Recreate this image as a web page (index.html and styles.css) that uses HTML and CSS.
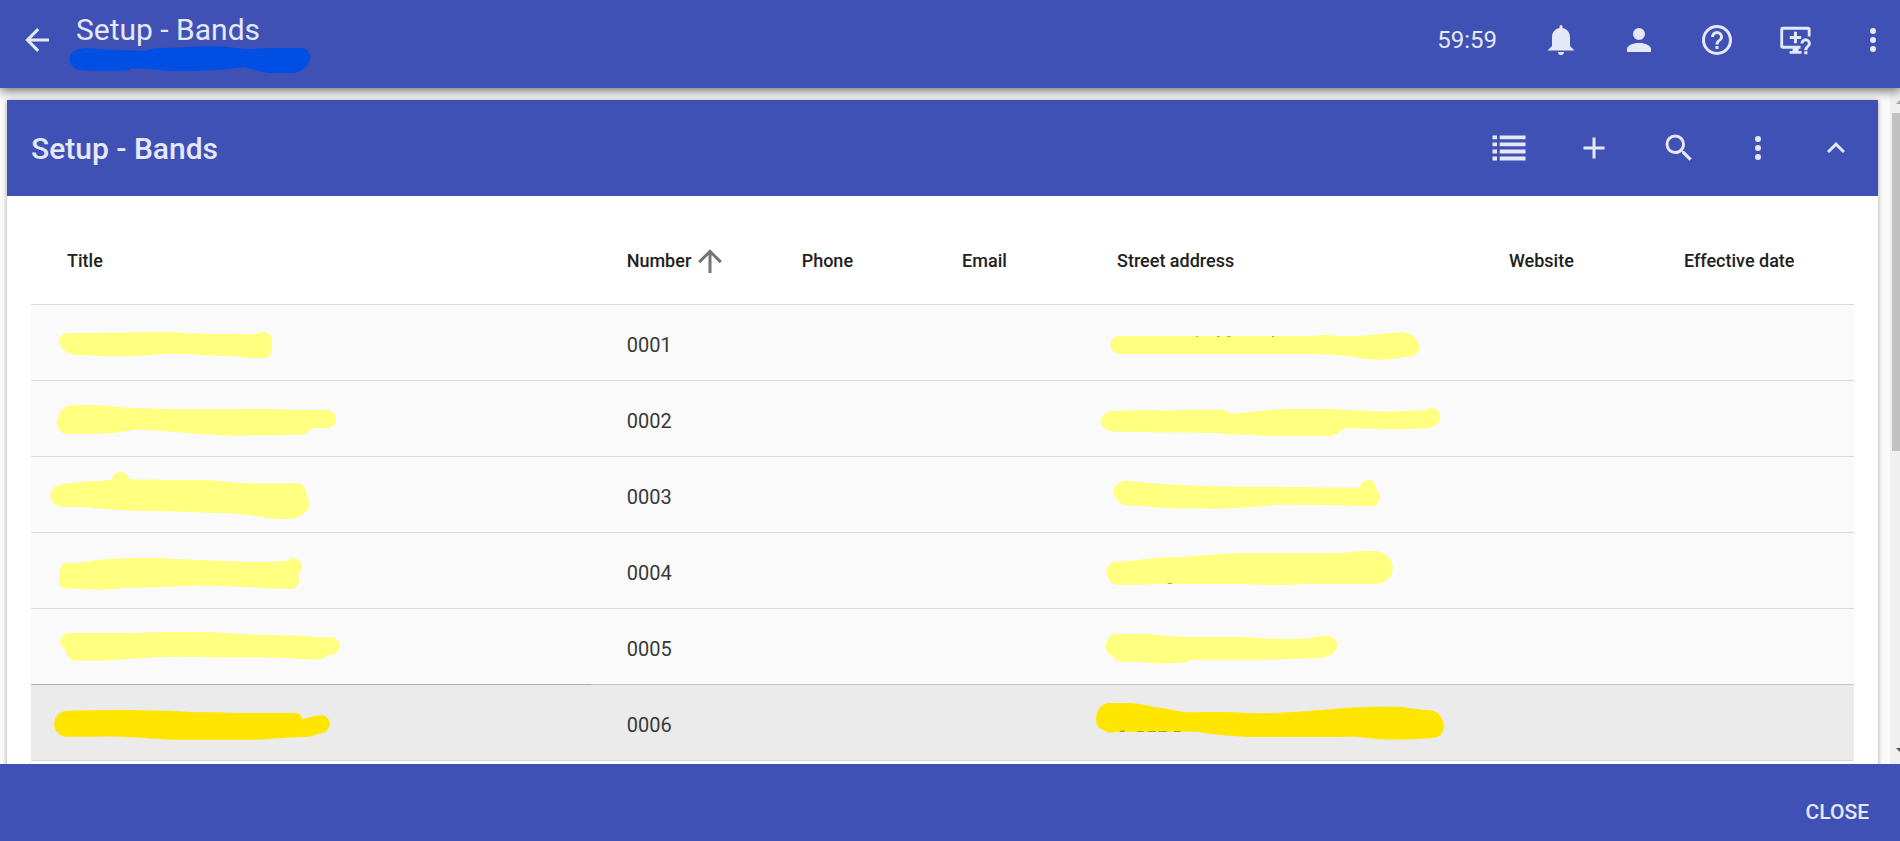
FILE: index.html
```html
<!DOCTYPE html>
<html lang="en">
<head>
<meta charset="utf-8">
<title>Setup - Bands</title>
<link rel="stylesheet" href="styles.css">
</head>
<body>
<div class="app">
  <header class="app-bar">
    <button class="icon-btn" aria-label="Back"><svg class="icon" viewBox="0 0 24 24"><path d="M20,11V13H8L13.5,18.5L12.08,19.92L4.16,12L12.08,4.08L13.5,5.5L8,11H20Z"/></svg></button>
    <div class="app-heading">
      <h1 class="app-title">Setup - Bands</h1>
      <svg class="subtitle-mark" viewBox="207 135 726 90" aria-hidden="true"><path d="M209 178C209 158 225 147 258 144C300 146 340 151 440 152Q455 144 480 144C540 144 580 139 640 139C690 139 710 148 750 147C790 144 850 144 905 144C925 147 931 160 931 174C928 195 905 218 875 220H820C790 219 760 208 735 202C700 205 670 212 600 212H500C460 208 430 204 395 205Q388 213 375 213H290C260 211 235 212 222 203Q209 192 209 178Z"/></svg>
    </div>
    <div class="app-actions">
      <span class="timer">59:59</span>
      <button class="icon-btn" aria-label="Notifications"><svg class="icon" viewBox="0 0 24 24"><path d="M14,20A2,2 0 0,1 12,22A2,2 0 0,1 10,20H14M12,2A1,1 0 0,1 13,3V4.08C15.84,4.56 18,7.03 18,10V16L21,19H3L6,16V10C6,7.03 8.16,4.56 11,4.08V3A1,1 0 0,1 12,2Z"/></svg></button>
      <button class="icon-btn" aria-label="Account"><svg class="icon" viewBox="0 0 24 24"><path d="M12,4A4,4 0 0,1 16,8A4,4 0 0,1 12,12A4,4 0 0,1 8,8A4,4 0 0,1 12,4M12,14C16.42,14 20,15.79 20,18V20H4V18C4,15.79 7.58,14 12,14Z"/></svg></button>
      <button class="icon-btn" aria-label="Help"><svg class="icon" viewBox="0 0 24 24"><path d="M11,18H13V16H11V18M12,2A10,10 0 0,0 2,12A10,10 0 0,0 12,22A10,10 0 0,0 22,12A10,10 0 0,0 12,2M12,20C7.59,20 4,16.41 4,12C4,7.59 7.59,4 12,4C16.41,4 20,7.59 20,12C20,16.41 16.41,20 12,20M12,6A4,4 0 0,0 8,10H10A2,2 0 0,1 12,8A2,2 0 0,1 14,10C14,12 11,11.75 11,15H13C13,12.75 16,12.5 16,10A4,4 0 0,0 12,6Z"/></svg></button>
      <button class="icon-btn" aria-label="Remote support"><svg class="icon" viewBox="-0.4 0 24 24"><path d="M3.5 3.2H20.5A1.6 1.6 0 0 1 22 4.8V9.7H20.1V5.2H3.7V15.8H15.3V17.8H14V19.3H16V21.2H8V19.3H10V17.8H3.5A1.6 1.6 0 0 1 1.8 16.2V4.8A1.6 1.6 0 0 1 3.5 3.2M10.9 6.5H12.9V9.4H15.7V11.4H12.9V14.2H10.9V11.4H8.1V9.4H10.9ZM15.2 14.4A3.5 3.5 0 0 1 22.2 14.4C22.2 16.6 19.9 16.8 19.9 18.8H17.8C17.8 16.2 20.2 16 20.2 14.4A1.5 1.5 0 0 0 17.2 14.4ZM17.8 19.5H19.9V21.5H17.8Z"/></svg></button>
      <button class="icon-btn" aria-label="More"><svg class="icon" viewBox="0 0 24 24"><path d="M12,16A2,2 0 0,1 14,18A2,2 0 0,1 12,20A2,2 0 0,1 10,18A2,2 0 0,1 12,16M12,10A2,2 0 0,1 14,12A2,2 0 0,1 12,14A2,2 0 0,1 10,12A2,2 0 0,1 12,10M12,4A2,2 0 0,1 14,6A2,2 0 0,1 12,8A2,2 0 0,1 10,6A2,2 0 0,1 12,4Z"/></svg></button>
    </div>
  </header>

  <div class="content">
    <main class="page">
      <section class="card">
        <div class="card-bar">
          <h2 class="card-title">Setup - Bands</h2>
          <div class="card-tools">
            <button class="icon-btn" aria-label="List view"><svg class="icon" viewBox="0 0 24 24"><path d="M1 3.6H4V6.2H1ZM5.8 3.6H23V6.2H5.8ZM1 8.3H4V10.9H1ZM5.8 8.3H23V10.9H5.8ZM1 13H4V15.6H1ZM5.8 13H23V15.6H5.8ZM1 17.7H4V20.3H1ZM5.8 17.7H23V20.3H5.8Z"/></svg></button>
            <button class="icon-btn" aria-label="Add"><svg class="icon" viewBox="0 0 24 24"><path d="M19,13H13V19H11V13H5V11H11V5H13V11H19V13Z"/></svg></button>
            <button class="icon-btn" aria-label="Search"><svg class="icon" viewBox="0 0 24 24"><path d="M9.5,3A6.5,6.5 0 0,1 16,9.5C16,11.11 15.41,12.59 14.44,13.73L14.71,14H15.5L20.5,19L19,20.5L14,15.5V14.71L13.73,14.44C12.59,15.41 11.11,16 9.5,16A6.5,6.5 0 0,1 3,9.5A6.5,6.5 0 0,1 9.5,3M9.5,5C7,5 5,7 5,9.5C5,12 7,14 9.5,14C12,14 14,12 14,9.5C14,7 12,5 9.5,5Z"/></svg></button>
          </div>
          <div class="card-menu">
            <button class="icon-btn" aria-label="Table options"><svg class="icon" viewBox="0 0 24 24"><path d="M12,16A2,2 0 0,1 14,18A2,2 0 0,1 12,20A2,2 0 0,1 10,18A2,2 0 0,1 12,16M12,10A2,2 0 0,1 14,12A2,2 0 0,1 12,14A2,2 0 0,1 10,12A2,2 0 0,1 12,10M12,4A2,2 0 0,1 14,6A2,2 0 0,1 12,8A2,2 0 0,1 10,6A2,2 0 0,1 12,4Z"/></svg></button>
            <button class="icon-btn" aria-label="Collapse"><svg class="icon" viewBox="0 0 24 24"><path d="M7.41,15.41L12,10.83L16.59,15.41L18,14L12,8L6,14L7.41,15.41Z"/></svg></button>
          </div>
        </div>
        <div class="card-body">
          <table class="bands">
            <colgroup><col class="c-title"><col class="c-number"><col class="c-phone"><col class="c-email"><col class="c-street"><col class="c-website"><col></colgroup>
            <thead>
              <tr>
                <th>Title</th>
                <th aria-sort="ascending"><span class="sorted">Number<svg class="sort-icon" viewBox="0 0 24 24"><path d="M13,20H11V8L5.5,13.5L4.08,12.08L12,4.16L19.92,12.08L18.5,13.5L13,8V20Z"/></svg></span></th>
                <th>Phone</th><th>Email</th><th>Street address</th><th>Website</th><th>Effective date</th>
              </tr>
            </thead>
            <tbody>
              <tr>
                <td class="marked"><svg class="mark" viewBox="93 255 1140 225"><path d="M176 366C176 352 188 339 205 339C300 340 380 337 460 336C520 335 560 341 640 342L765 343Q780 336 793 335Q815 339 816 360V390Q811 411 795 414H750C720 413 715 408 690 408C620 407 560 401 515 401C470 403 430 408 370 409H310C270 406 235 407 215 403Q178 387 176 366Z"/></svg></td>
                <td>0001</td><td></td><td></td>
                <td class="marked"><svg class="mark" viewBox="3 255 1140 225"><path d="M91 375Q93 352 115 348H700Q720 345 740 345Q780 350 840 347C880 346 920 339 965 336Q1010 341 1019 380Q1014 406 990 409C960 412 940 421 900 419C850 417 830 414 800 408C760 405 730 403 690 402H115Q93 398 91 375Z"/><path class="speck" d="M349 348h5v2h-5zM411 348h7v2h-7zM442 348h9v2h-9zM576 348h6v2h-6z"/></svg></td>
                <td></td><td></td>
              </tr>
              <tr>
                <td class="marked"><svg class="mark" viewBox="93 483 1140 225"><path d="M170 608Q176 562 215 555H280C340 558 370 564 430 565C530 569 600 568 700 568C780 566 850 569 900 570H985Q1007 575 1008 598Q1004 620 988 624H935Q925 644 905 644C850 644 800 647 700 647C600 645 550 637 500 634C450 631 425 627 395 630C370 636 340 641 290 641H195Q172 634 170 608Z"/></svg></td>
                <td>0002</td><td></td><td></td>
                <td class="marked"><svg class="mark" viewBox="3 483 1140 225"><path d="M61 603Q65 578 95 573C140 572 200 569 260 572C310 569 370 569 425 570Q440 570 450 581C500 578 560 570 620 567H750C800 570 860 575 950 574Q1010 573 1035 570Q1045 562 1057 564Q1081 570 1082 592Q1078 617 1050 624C1000 629 920 629 790 625Q775 647 745 648H560C500 642 470 647 415 639C340 637 250 639 190 635H100Q65 630 61 603Z"/></svg></td>
                <td></td><td></td>
              </tr>
              <tr>
                <td class="marked"><svg class="mark" viewBox="93 711 1140 225"><path d="M151 822Q155 798 190 792C240 785 290 784 335 780Q342 757 362 755Q380 757 388 778C450 780 540 780 620 780C680 785 710 789 760 790H895Q920 797 920 826Q926 840 928 855Q922 883 885 894Q850 900 810 895C770 890 750 883 710 881C620 879 550 874 460 874C380 871 310 869 260 861H185Q160 856 155 840Q151 834 151 822Z"/></svg></td>
                <td>0003</td><td></td><td></td>
                <td class="marked"><svg class="mark" viewBox="3 711 1140 225"><path d="M100 812Q105 785 138 782C200 789 270 793 340 797C430 799 530 800 620 801C710 802 780 804 838 803Q845 780 865 779Q887 783 890 806L899 830Q896 852 885 859C810 858 750 854 650 854Q590 853 540 859C460 866 400 867 340 865C280 866 250 864 210 860C180 858 140 859 120 850L108 835Q100 825 100 812Z"/></svg></td>
                <td></td><td></td>
              </tr>
              <tr>
                <td class="marked"><svg class="mark" viewBox="93 99 1140 225"><path d="M177 215Q182 189 198 188H240C290 178 350 175 400 174H470C550 178 640 182 780 186Q830 185 862 182Q872 172 885 174Q905 180 905 204Q901 219 894 224Q900 238 896 248Q890 267 868 267C780 265 720 258 620 257C530 257 480 263 370 263C330 269 300 270 265 268L190 265Q174 259 177 237Q181 230 177 215Z"/></svg></td>
                <td>0004</td><td></td><td></td>
                <td class="marked"><svg class="mark" viewBox="3 99 1140 225"><path d="M79 212Q83 188 105 185C150 185 200 175 270 172C350 170 400 162 470 160H770C810 156 840 153 885 153Q933 158 939 202Q934 246 893 251H680Q580 259 500 252H240C200 255 150 254 108 254Q88 250 84 230Q79 224 79 212Z"/><path class="speck" d="M263 249h13v2h-13z"/></svg></td>
                <td></td><td></td>
              </tr>
              <tr>
                <td class="marked"><svg class="mark" viewBox="93 327 1140 225"><path d="M180 425Q184 402 205 399H400C450 395 550 396 640 396C700 402 770 405 880 406C920 408 960 414 1000 412Q1019 419 1019 438Q1016 457 1000 463L983 466Q970 479 950 479C890 478 870 472 820 473C720 472 640 473 540 470C450 471 380 477 310 482H220Q198 476 197 448Q181 440 180 425Z"/></svg></td>
                <td>0005</td><td></td><td></td>
                <td class="marked"><svg class="mark" viewBox="3 327 1140 225"><path d="M77 437Q81 407 105 402H200C250 406 290 411 340 411H490C560 417 620 418 690 415C710 409 725 406 745 408Q771 414 773 437Q765 470 710 475C650 475 600 480 530 479H335Q325 487 310 487C250 493 220 490 180 485H120Q105 480 98 468Q77 460 77 437Z"/></svg></td>
                <td></td><td></td>
              </tr>
              <tr class="is-active">
                <td class="marked"><svg class="mark" viewBox="93 555 1140 225"><path d="M162 672Q166 638 195 633C270 629 400 629 480 632C540 632 570 638 640 637C700 640 780 639 890 639Q904 643 907 658C930 652 945 646 968 645Q990 652 990 673Q986 693 970 698C945 703 935 711 910 711C850 712 820 718 770 719H510C440 715 360 708 290 710H195Q165 705 162 672Z"/></svg></td>
                <td>0006</td><td></td><td></td>
                <td class="marked"><svg class="mark" viewBox="3 555 1140 225"><path d="M48 660Q48 618 85 609H150C195 612 210 620 240 623C280 629 300 637 340 637C420 634 470 637 540 640C640 639 700 630 760 627C830 620 910 620 970 621C1000 627 1020 629 1050 630Q1086 635 1092 680Q1089 711 1060 714C990 719 930 722 870 715C840 711 820 709 780 711H500C450 705 400 705 350 695H105Q90 702 75 692Q49 686 48 660Z"/><path class="speck" d="M120 692h14v3h-14zM172 693h20v2h-20zM204 693h24v2h-24zM236 693h24v2h-24zM282 693h20v2h-20z"/></svg></td>
                <td></td><td></td>
              </tr>
            </tbody>
          </table>
        </div>
      </section>
    </main>
    <div class="scrollbar" aria-hidden="true">
      <svg class="scroll-arrow" viewBox="0 0 10 25"><path class="arrow-up" d="M6 16L10 12V16Z"/></svg>
      <div class="scroll-thumb"></div>
      <svg class="scroll-arrow scroll-arrow-end" viewBox="0 0 10 25"><path class="arrow-down" d="M6 9H10V13Z"/></svg>
    </div>
  </div>

  <footer class="bottom-bar"><button class="close-btn">CLOSE</button></footer>
</div>
</body>
</html>
```

FILE: styles.css
```css
* { box-sizing: border-box; }

body {
  margin: 0;
  background: #fafafa;
  color: #212121;
  font-family: Roboto, "Liberation Sans", sans-serif;
}

button {
  border: 0;
  background: none;
  color: inherit;
  font: inherit;
  cursor: pointer;
}

.app {
  display: flex;
  flex-direction: column;
  height: 100vh;
  overflow: hidden;
}

.app-bar,
.card-bar,
.bottom-bar {
  background: #3f51b5;
  color: #e5e8f6;
}

.app-bar {
  z-index: 1;
  display: flex;
  align-items: flex-start;
  padding: 8px 9px 0 19px;
  height: 88px;
  box-shadow: 0 3px 10px rgba(0, 0, 0, .55);
}

.icon-btn {
  display: flex;
  padding: 0;
}

.icon {
  width: 36px;
  height: 36px;
  fill: currentColor;
}

.app-bar > .icon-btn { margin-top: 14px; }

.app-heading {
  flex: 1;
  padding-left: 14px;
}

.app-title {
  margin: 0;
  padding-left: 7px;
  font-size: 30px;
  font-weight: 400;
  line-height: 44px;
}

.subtitle-mark {
  display: block;
  width: 242px;
  height: 30px;
  margin-top: -7px;
  fill: #004fe5;
}

.app-actions {
  display: flex;
  align-items: center;
  gap: 42px;
  height: 64px;
}

.timer {
  font-size: 24px;
  margin-right: 4px;
}

.content {
  display: flex;
  flex: 1;
  min-height: 0;
}

.page {
  flex: 1;
  padding: 12px 12px 0 7px;
  overflow: hidden;
}

.card {
  background: #fff;
  box-shadow: 0 1px 5px rgba(0, 0, 0, .35);
}

.card-bar {
  display: flex;
  align-items: center;
  height: 96px;
  padding: 0 24px;
}

.card-title {
  flex: 1;
  margin: 0;
  font-size: 30px;
  font-weight: 500;
}

.card-tools {
  display: flex;
  gap: 49px;
  margin-right: 43px;
}

.card-menu {
  display: flex;
  gap: 42px;
}

.card-body { padding: 24px; }

.bands {
  width: 100%;
  table-layout: fixed;
  border-collapse: collapse;
}

.c-title { width: 30.7%; }
.c-number { width: 9.6%; }
.c-phone { width: 8.8%; }
.c-email { width: 8.5%; }
.c-street { width: 21.5%; }
.c-website { width: 9.6%; }

.bands th {
  height: 84px;
  padding: 0 0 2px 36px;
  font-size: 18px;
  font-weight: 500;
  text-align: left;
  white-space: nowrap;
}

.sorted {
  display: flex;
  align-items: center;
}

.sort-icon {
  width: 36px;
  height: 36px;
  margin-left: 1px;
  fill: #757575;
}

.bands td {
  height: 76px;
  padding: 5px 0 0 36px;
  border-top: 1px solid #d9d9d9;
  background: #fafafa;
  color: #383838;
  font-size: 20px;
}

.bands .marked { padding: 0; }

.bands .is-active td {
  border-top-color: #c6c6c6;
  border-bottom: 1px solid #d9d9d9;
  background: #ebebeb;
}

.bands .is-active td:first-child { border-top-color: #b0b0b0; }

.mark {
  display: block;
  width: 380px;
  height: 75px;
  fill: #ffff80;
}

.is-active .mark { fill: #ffe600; }

.mark .speck { fill: #8a8640; }

.scrollbar {
  display: flex;
  flex-direction: column;
  width: 10px;
  background: #f0f0f0;
}

.scroll-arrow {
  width: 10px;
  height: 25px;
}

.arrow-up { fill: #a3a3a3; }
.arrow-down { fill: #505050; }

.scroll-thumb {
  height: 50%;
  margin-left: 2px;
  background: #c1c1c1;
}

.scroll-arrow-end { margin-top: auto; }

.bottom-bar {
  display: flex;
  justify-content: flex-end;
  height: 77px;
  padding: 18px 31px 0 0;
}

.close-btn {
  height: 60px;
  padding: 0;
  font-size: 21px;
  font-weight: 500;
}
```
